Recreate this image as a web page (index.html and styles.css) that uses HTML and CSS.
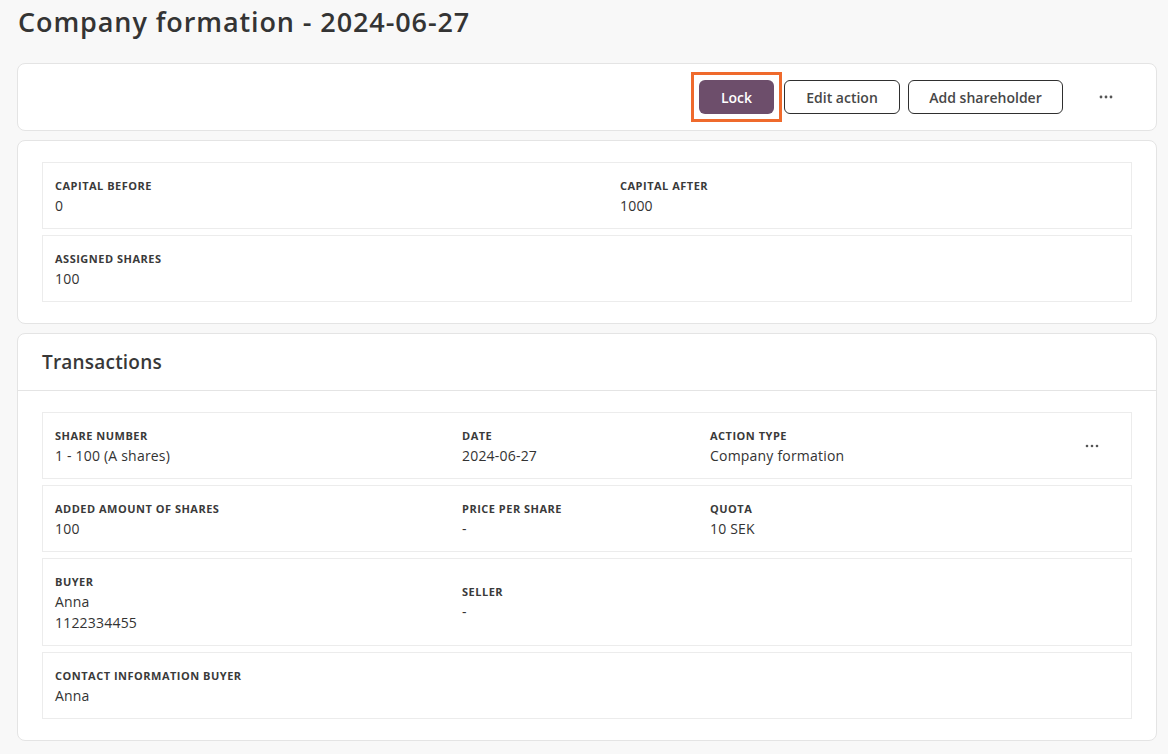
FILE: index.html
```html
<!DOCTYPE html>
<html>
<head>
<meta charset="utf-8">
<link rel="stylesheet" href="styles.css">
</head>
<body>
<div class="page">
  <h1 class="title">Company formation - 2024-06-27</h1>

  <div class="card toolbar">
    <div class="actions">
      <div class="focus-ring"><button class="btn btn-primary">Lock</button></div>
      <button class="btn btn-outline btn-edit">Edit action</button>
      <button class="btn btn-outline btn-add">Add shareholder</button>
      <button class="btn-dots" aria-label="More">
        <svg width="14" height="4" viewBox="0 0 14 4"><circle cx="2" cy="2" r="1.4"/><circle cx="7" cy="2" r="1.4"/><circle cx="12" cy="2" r="1.4"/></svg>
      </button>
    </div>
  </div>

  <div class="card summary">
    <div class="row cols-2">
      <div class="field"><div class="label">Capital before</div><div class="value">0</div></div>
      <div class="field"><div class="label">Capital after</div><div class="value">1000</div></div>
    </div>
    <div class="row cols-2">
      <div class="field"><div class="label">Assigned shares</div><div class="value">100</div></div>
    </div>
  </div>

  <div class="card transactions">
    <div class="card-header">Transactions</div>
    <div class="card-body">
      <div class="row cols-tx">
        <div class="field"><div class="label">Share number</div><div class="value">1 - 100 (A shares)</div></div>
        <div class="field"><div class="label">Date</div><div class="value">2024-06-27</div></div>
        <div class="field"><div class="label">Action type</div><div class="value">Company formation</div></div>
        <div class="row-dots">
          <svg width="14" height="4" viewBox="0 0 14 4"><circle cx="2" cy="2" r="1.3"/><circle cx="7" cy="2" r="1.3"/><circle cx="12" cy="2" r="1.3"/></svg>
        </div>
      </div>
      <div class="row cols-tx">
        <div class="field"><div class="label">Added amount of shares</div><div class="value">100</div></div>
        <div class="field"><div class="label">Price per share</div><div class="value">-</div></div>
        <div class="field"><div class="label">Quota</div><div class="value">10 SEK</div></div>
      </div>
      <div class="row cols-tx tall">
        <div class="field"><div class="label">Buyer</div><div class="value">Anna</div><div class="value">1122334455</div></div>
        <div class="field"><div class="label">Seller</div><div class="value">-</div></div>
      </div>
      <div class="row cols-tx">
        <div class="field"><div class="label">Contact information buyer</div><div class="value">Anna</div></div>
      </div>
    </div>
  </div>
</div>
</body>
</html>
```

FILE: styles.css
```css
* { box-sizing: border-box; }
html, body { margin: 0; padding: 0; }
body {
  background: #f8f8f8;
  font-family: "Open Sans", "Liberation Sans", sans-serif;
  color: #333;
}
.page {
  padding: 4px 11px 12px 17px;
}
.title {
  margin: 0 0 0 1px;
  font-size: 27px;
  font-weight: 600;
  line-height: 36px;
  color: #343434;
  height: 59px;
  letter-spacing: 0.9px;
}
.card {
  background: #fff;
  border: 1px solid #e4e4e4;
  border-radius: 8px;
  margin-bottom: 9px;
}
.toolbar {
  height: 68px;
  display: flex;
  align-items: center;
  justify-content: flex-end;
  padding-right: 32px;
}
.actions {
  display: flex;
  align-items: center;
}
.focus-ring {
  border: 3px solid #ef6a2c;
  padding: 5px;
  margin-right: 2px;
}
.btn {
  font-family: inherit;
  height: 34px;
  border-radius: 6px;
  font-size: 14px;
  font-weight: 600;
  cursor: pointer;
  padding: 0;
}
.btn-primary {
  width: 75px;
  background: #6d4e6b;
  color: #fff;
  border: none;
}
.btn-outline {
  background: #fff;
  border: 1px solid #2f2f2f;
  color: #474747;
}
.btn-edit { width: 116px; margin-right: 8px; }
.btn-add { width: 155px; margin-right: 25px; }
.btn-dots {
  width: 36px;
  height: 34px;
  border: none;
  background: transparent;
  display: flex;
  align-items: center;
  justify-content: center;
  padding: 0;
}
.btn-dots svg, .row-dots svg { fill: #555; }

.summary {
  padding: 21px 24px;
  display: flex;
  flex-direction: column;
  gap: 6px;
}
.row {
  border: 1px solid #ececec;
  min-height: 67px;
  padding: 12px 12px;
  display: grid;
  align-items: center;
}
.cols-2 { grid-template-columns: 565px 1fr; }
.cols-tx { grid-template-columns: 407px 248px 1fr 54px; }
.row.tall { min-height: 88px; }
.field { padding-top: 2px; }
.label {
  font-size: 11px;
  font-weight: 700;
  text-transform: uppercase;
  letter-spacing: 0.5px;
  line-height: 16px;
  color: #3a3a3a;
}
.value {
  font-size: 14px;
  line-height: 20px;
  margin-top: 2px;
  letter-spacing: 0.2px;
  color: #333;
}
.value + .value { margin-top: 1px; }
.transactions { margin-bottom: 0; }
.card-header {
  height: 57px;
  border-bottom: 1px solid #e4e4e4;
  padding: 0 24px;
  display: flex;
  align-items: center;
  font-size: 19px;
  font-weight: 600;
  letter-spacing: 0.2px;
  color: #383838;
}
.card-body {
  padding: 21px 24px 21px;
  display: flex;
  flex-direction: column;
  gap: 6px;
}
.row-dots {
  display: flex;
  align-items: center;
  justify-content: flex-start;
  padding-left: 20px;
  align-self: start;
  padding-top: 19px;
}
```
